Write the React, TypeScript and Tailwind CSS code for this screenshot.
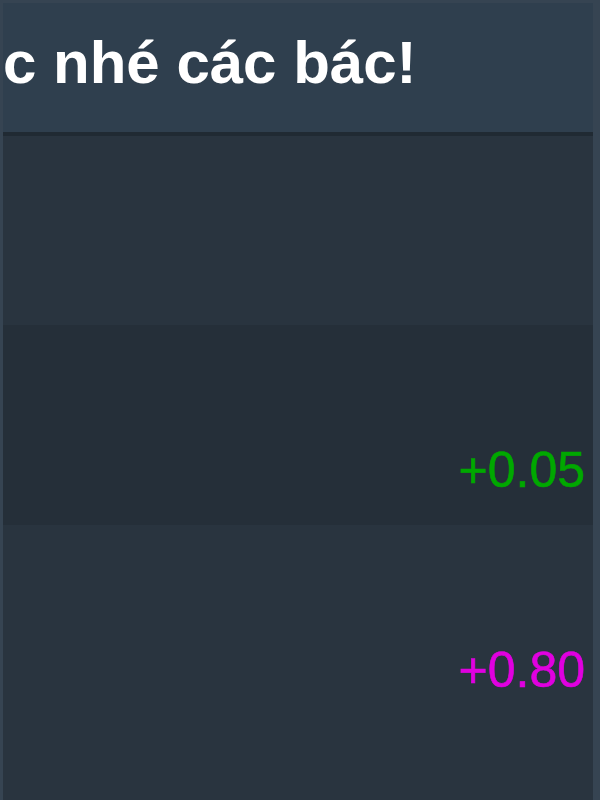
const rows = [
  { h: 'h-[189px]', bg: 'bg-[#29343f]', value: '', color: '' },
  { h: 'h-[200px]', bg: 'bg-[#252f39]', value: '+0.05', color: 'text-[#00a800]' },
  { h: 'h-[270px]', bg: 'bg-[#29343f]', value: '+0.80', color: 'text-[#e000e0]' },
];

export default function App() {
  return (
    <div className="w-[600px] h-[800px] overflow-hidden bg-[#29343f] font-['Liberation_Sans',Arial,sans-serif]">
      <div className="flex flex-col h-full border-t-[3px] border-l-[3px] border-r-[7px] border-[#364452]">
        {/* header */}
        <div className="h-[133px] shrink-0 bg-[#2f3f4e] border-b-[4px] border-[#202a33] pt-[30px] overflow-hidden">
          <h1 className="whitespace-nowrap text-[60px] leading-none font-bold text-white">
            c nhé các bác!
          </h1>
        </div>

        {rows.map((r, i) => (
          <div key={i} className={`${r.h} shrink-0 ${r.bg} flex justify-end pt-[120px] pr-[8px]`}>
            {r.value && (
              <span className={`text-[50px] leading-none [-webkit-text-stroke:0.6px_currentColor] ${r.color}`}>
                {r.value}
              </span>
            )}
          </div>
        ))}
      </div>
    </div>
  );
}
